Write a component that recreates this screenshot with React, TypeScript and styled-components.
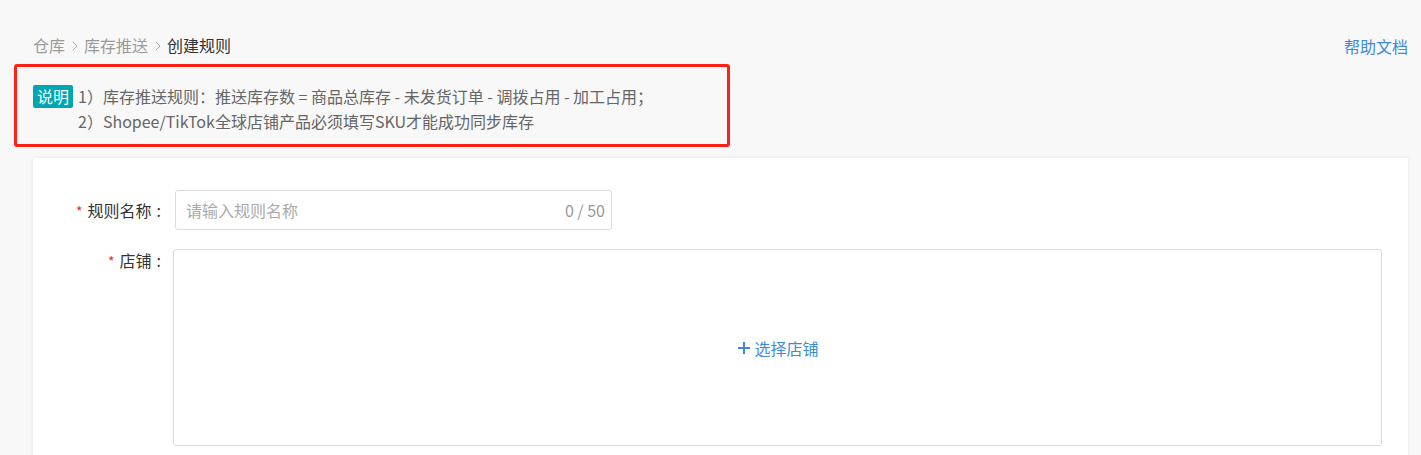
import React from 'react';
import styled, { createGlobalStyle } from 'styled-components';

const GlobalStyle = createGlobalStyle`
  html, body {
    margin: 0;
    padding: 0;
    background: #f8f8f8;
    font-family: "Noto Sans CJK SC", "Noto Sans", "Liberation Sans", sans-serif;
    font-size: 16px;
    color: #333;
  }
`;

const Page = styled.div`
  padding: 34px 13px 0 33px;
  height: 455px;
  box-sizing: border-box;
  overflow: hidden;
`;

const TopBar = styled.div`
  display: flex;
  justify-content: space-between;
  align-items: center;
  height: 22px;
`;

const Crumbs = styled.div`
  display: flex;
  align-items: center;
  font-size: 16px;
`;

const Crumb = styled.span<{ $current?: boolean }>`
  color: ${({ $current }) => ($current ? '#333' : '#9a9a9a')};
`;

const Sep = styled.span`
  display: inline-flex;
  margin: 1px 6px 0 7px;
`;

const HelpLink = styled.a`
  color: #3c8ad8;
  font-size: 16px;
  text-decoration: none;
  margin-top: 2px;
`;

const Notice = styled.div`
  margin: 8px 0 0 -19px;
  width: 716px;
  height: 83px;
  box-sizing: border-box;
  border: 3px solid #ff2016;
  border-radius: 3px;
  padding: 18px 0 0 16px;
  display: flex;
  align-items: flex-start;
  gap: 5px;
`;

const Badge = styled.span`
  flex: none;
  background: #00a7b0;
  color: #fff;
  font-size: 16px;
  line-height: 23px;
  height: 23px;
  padding: 0 4px;
  border-radius: 2px;
`;

const NoticeLines = styled.div`
  color: #666;
  font-size: 16px;
  line-height: 25px;
  margin-top: -1px;
`;

const Card = styled.div`
  margin-top: 11px;
  background: #fff;
  box-shadow: 0 0 4px rgba(0, 0, 0, 0.08);
  padding: 32px 26px 40px 0;
  display: flex;
  flex-direction: column;
  gap: 19px;
  height: 400px;
  box-sizing: border-box;
`;

const Row = styled.div<{ $top?: boolean }>`
  display: flex;
  align-items: ${({ $top }) => ($top ? 'flex-start' : 'center')};
`;

const Label = styled.label<{ $gap: number }>`
  width: 128px;
  flex: none;
  text-align: right;
  font-size: 16px;
  line-height: 22px;
  color: #333;
  margin-right: ${({ $gap }) => $gap}px;
`;

const Star = styled.span`
  color: #f5222d;
  margin-right: 5px;
  font-size: 14px;
`;

const Colon = styled.span`
  margin-left: 5px;
`;

const InputBox = styled.div`
  width: 437px;
  height: 40px;
  box-sizing: border-box;
  border: 1px solid #dcdcdc;
  border-radius: 3px;
  display: flex;
  align-items: center;
  justify-content: space-between;
  padding: 0 6px 0 10px;
`;

const Placeholder = styled.span`
  color: #aaa;
  font-size: 16px;
`;

const Counter = styled.span`
  color: #999;
  font-size: 16px;
`;

const ShopBox = styled.div`
  flex: 1;
  height: 197px;
  box-sizing: border-box;
  border: 1px solid #dcdcdc;
  border-radius: 3px;
  display: flex;
  align-items: center;
  justify-content: center;
`;

const AddButton = styled.button`
  border: none;
  background: none;
  color: #3c8ad8;
  font: inherit;
  font-size: 16px;
  display: flex;
  align-items: center;
  gap: 4px;
  cursor: pointer;
  padding: 0;
  margin-left: 2px;
`;

const Chevron = () => (
  <svg width="6" height="10" viewBox="0 0 6 10">
    <path d="M0.8 0.8L5 5L0.8 9.2" fill="none" stroke="#aaa" strokeWidth="1" />
  </svg>
);

export default function App() {
  return (
    <>
      <GlobalStyle />
      <Page>
        <TopBar>
          <Crumbs>
            <Crumb>仓库</Crumb>
            <Sep><Chevron /></Sep>
            <Crumb>库存推送</Crumb>
            <Sep><Chevron /></Sep>
            <Crumb $current>创建规则</Crumb>
          </Crumbs>
          <HelpLink href="#">帮助文档</HelpLink>
        </TopBar>
        <Notice>
          <Badge>说明</Badge>
          <NoticeLines>
            <div>1）库存推送规则：推送库存数 = 商品总库存 - 未发货订单 - 调拨占用 - 加工占用；</div>
            <div>2）Shopee/TikTok全球店铺产品必须填写SKU才能成功同步库存</div>
          </NoticeLines>
        </Notice>
        <Card>
          <Row>
            <Label $gap={14}>
              <Star>*</Star>规则名称<Colon>:</Colon>
            </Label>
            <InputBox>
              <Placeholder>请输入规则名称</Placeholder>
              <Counter>0 / 50</Counter>
            </InputBox>
          </Row>
          <Row $top>
            <Label $gap={12}>
              <Star>*</Star>店铺<Colon>:</Colon>
            </Label>
            <ShopBox>
              <AddButton>
                <svg width="12" height="12" viewBox="0 0 12 12">
                  <path d="M6 0v12M0 6h12" stroke="#3c8ad8" strokeWidth="2" />
                </svg>
                选择店铺
              </AddButton>
            </ShopBox>
          </Row>
        </Card>
      </Page>
    </>
  );
}
